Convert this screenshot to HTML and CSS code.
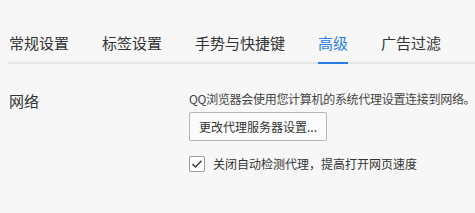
FILE: index.html
```html
<!DOCTYPE html>
<html lang="zh-CN">
<head>
<meta charset="utf-8">
<title>高级设置</title>
<link rel="stylesheet" href="styles.css">
</head>
<body>
<nav class="tabs">
  <span class="tab">常规设置</span>
  <span class="tab">标签设置</span>
  <span class="tab">手势与快捷键</span>
  <span class="tab active">高级</span>
  <span class="tab">广告过滤</span>
</nav>
<section class="row">
  <div class="label">网络</div>
  <div class="content">
    <p class="desc">QQ浏览器会使用您计算机的系统代理设置连接到网络。</p>
    <button class="btn" type="button">更改代理服务器设置...</button>
    <label class="check">
      <span class="box"><svg width="12" height="10" viewBox="0 0 12 10"><path d="M1.5 5.2 L4.5 8 L10.5 1.8" fill="none" stroke="#444" stroke-width="1.6"/></svg></span>
      <span class="check-text">关闭自动检测代理，提高打开网页速度</span>
    </label>
  </div>
</section>
</body>
</html>
```
FILE: styles.css
```css
html, body {
  margin: 0;
  padding: 0;
}
body {
  background: #f7f7f7;
  font-family: "Noto Sans CJK SC", "Noto Sans", sans-serif;
  color: #333;
  width: 475px;
  height: 213px;
  overflow: hidden;
}
.tabs {
  display: flex;
  gap: 33px;
  margin-left: 8px;
  padding-left: 1px;
  border-bottom: 2px solid #e6e6e6;
}
.tab {
  font-size: 15px;
  line-height: 20px;
  padding-top: 33px;
  padding-bottom: 9px;
  border-bottom: 2px solid transparent;
  margin-bottom: -2px;
  color: #333;
  white-space: nowrap;
}
.tab.active {
  color: #2a7de9;
  border-bottom-color: #2a7de9;
}
.row {
  display: flex;
  padding-top: 26px;
}
.label {
  flex: 0 0 180px;
  padding-left: 9px;
  font-size: 15px;
  line-height: 20px;
  margin-top: 1px;
  color: #333;
}
.content {
  display: flex;
  flex-direction: column;
  align-items: flex-start;
  min-width: 0;
}
.desc {
  margin: 0;
  font-size: 12px;
  line-height: 18px;
  letter-spacing: -0.3px;
  color: #444;
  white-space: nowrap;
}
.btn {
  margin-top: 4px;
  font-family: inherit;
  font-size: 12px;
  line-height: 17px;
  padding: 5px 9px;
  border: 1px solid #b4b4b4;
  border-radius: 2px;
  background: #fbfbfb;
  color: #333;
}
.check {
  margin-top: 14px;
  display: flex;
  align-items: center;
  gap: 8px;
}
.box {
  width: 14px;
  height: 14px;
  border: 1px solid #9c9c9c;
  border-radius: 2px;
  background: #fff;
  display: flex;
  align-items: center;
  justify-content: center;
}
.check-text {
  font-size: 12px;
  line-height: 18px;
  color: #333;
}
```
